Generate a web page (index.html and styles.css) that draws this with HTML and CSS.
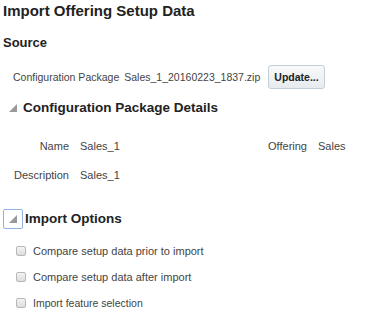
FILE: index.html
```html
<!DOCTYPE html>
<html lang="en">
<head>
  <meta charset="UTF-8">
  <title>Import Offering Setup Data</title>
  <link rel="stylesheet" href="styles.css">
</head>
<body>
  <h1 class="page-title">Import Offering Setup Data</h1>

  <h2 class="section-title">Source</h2>
  <div class="source-row">
    <span class="label">Configuration Package</span>
    <span class="value">Sales_1_20160223_1837.zip</span>
    <button class="btn">Update...</button>
  </div>

  <div class="disclosure">
    <span class="tri"></span>
    <h3 class="sub-title">Configuration Package Details</h3>
  </div>
  <div class="details">
    <span class="label right">Name</span>
    <span class="value">Sales_1</span>
    <span class="label right">Offering</span>
    <span class="value">Sales</span>
    <span class="label right">Description</span>
    <span class="value">Sales_1</span>
  </div>

  <div class="disclosure focused">
    <span class="tri-box"><span class="tri"></span></span>
    <h3 class="sub-title">Import Options</h3>
  </div>
  <ul class="options">
    <li><span class="check"></span>Compare setup data prior to import</li>
    <li><span class="check"></span>Compare setup data after import</li>
    <li class="small"><span class="check"></span>Import feature selection</li>
  </ul>
</body>
</html>
```

FILE: styles.css
```css
* {
  box-sizing: border-box;
  margin: 0;
  padding: 0;
}

body {
  font-family: "Liberation Sans", Arial, sans-serif;
  color: #333;
  background: #fff;
  padding: 2px 3px;
  font-size: 11px;
}

.page-title {
  font-size: 15px;
  font-weight: bold;
  color: #222;
  line-height: 18px;
}

.section-title {
  font-size: 13px;
  font-weight: bold;
  color: #222;
  margin-top: 15px;
  line-height: 16px;
}

.source-row {
  display: flex;
  align-items: center;
  margin-top: 14px;
  padding-left: 10px;
  gap: 5px;
  font-size: 10.5px;
}

.label {
  color: #444;
}

.value {
  color: #444;
}

.btn {
  font-family: inherit;
  font-weight: bold;
  font-size: 10.5px;
  color: #222;
  background: linear-gradient(#f8f9fa, #e8ebee);
  border: 1px solid #c4ced7;
  border-radius: 3px;
  height: 24px;
  padding: 0 5px;
  margin-left: 3px;
}

.disclosure {
  display: flex;
  align-items: center;
  margin-top: 10px;
  padding-left: 6px;
  gap: 6px;
}

.tri {
  width: 0;
  height: 0;
  border-left: 8px solid transparent;
  border-bottom: 8px solid #999;
}

.sub-title {
  font-size: 13.5px;
  font-weight: bold;
  color: #222;
  line-height: 18px;
}

.details {
  display: grid;
  grid-template-columns: 66px 1fr 52px 58px;
  column-gap: 11px;
  row-gap: 17px;
  margin-top: 23px;
  padding-left: 0;
}

.right {
  text-align: right;
}

.disclosure.focused {
  margin-top: 28px;
  padding-left: 0;
  gap: 2px;
}

.tri-box {
  display: flex;
  align-items: center;
  justify-content: center;
  width: 20px;
  height: 20px;
  border: 1px solid #8fb2e6;
  border-radius: 2px;
}

.options {
  list-style: none;
  margin-top: 9px;
  padding-left: 13px;
}

.options li {
  display: flex;
  align-items: center;
  gap: 7px;
  height: 26px;
  color: #444;
}

.options li.small {
  font-size: 10.5px;
}

.check {
  width: 10px;
  height: 10px;
  border: 1px solid #b8b8b8;
  border-radius: 2px;
  background: linear-gradient(#f4f4f4, #dcdcdc);
}
```
